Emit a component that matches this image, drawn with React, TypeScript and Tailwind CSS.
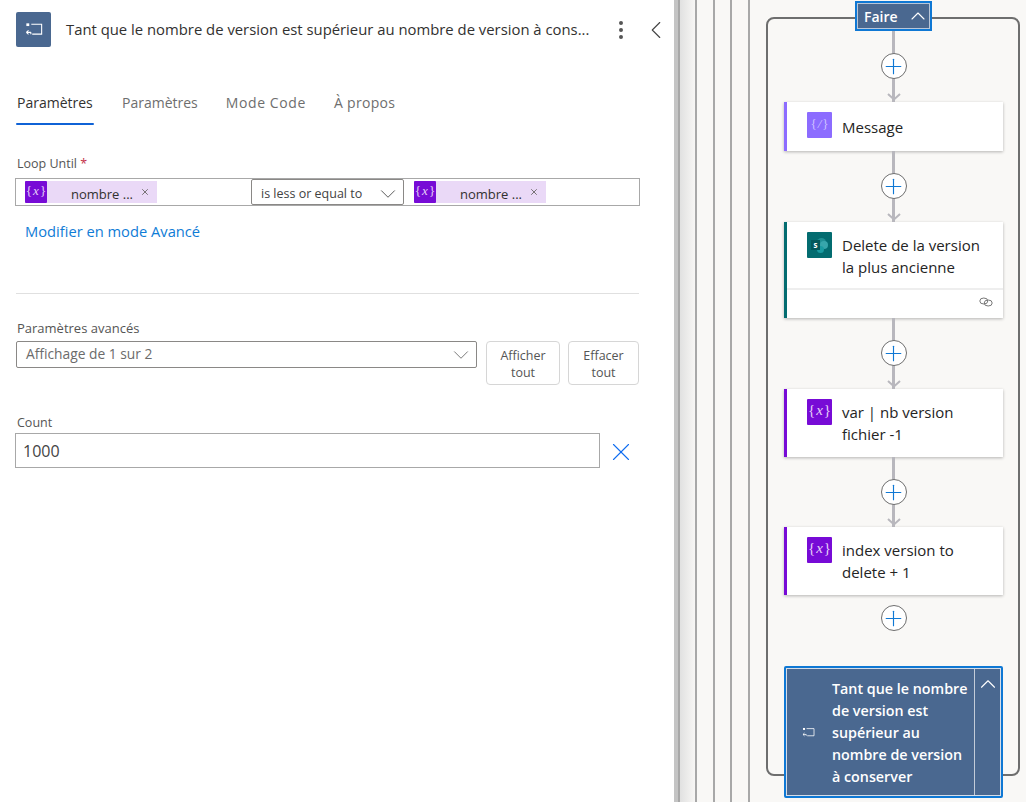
import { ChevronDown, ChevronLeft, ChevronUp, MoreVertical, Plus, X } from 'lucide-react'

const font = "font-['Open_Sans','Liberation_Sans',sans-serif]"

/** Icône "do until" : rectangle ouvert avec flèche de retour. */
function LoopIcon({ size }: { size: number }) {
  return (
    <svg width={size} height={size * 0.8} viewBox="0 0 20 16" fill="none" stroke="#fff" strokeWidth="1.2">
      <path d="M7 2.5h11.5v11H8" />
      <rect x="1.5" y="1.5" width="3.2" height="3" fill="#fff" stroke="none" />
      <path d="M1.5 11.5h5M1.5 11.5l2.4-2.2M1.5 11.5l2.4 2.2M6.5 11.5v2" />
    </svg>
  )
}

function VarIcon({
  size = 'w-[25px] h-[26px] text-[15px]',
  bg = 'bg-[#770bd6]',
  color = 'text-[#e6d2f7]',
  label = 'x',
}: {
  size?: string
  bg?: string
  color?: string
  label?: string
}) {
  return (
    <div className={`${size} ${bg} ${color} flex shrink-0 items-center justify-center rounded-[1px] pb-[3px] font-['Liberation_Serif',serif]`}>
      <span>{'{'}</span>
      <span className="italic px-[1px]">{label}</span>
      <span>{'}'}</span>
    </div>
  )
}

function Token() {
  return (
    <div className="flex h-[22px] w-[132px] items-center bg-[#ead9f7]">
      <VarIcon size="w-[22px] h-[22px] text-[13px]" />
      <span className="ml-[24px] w-[69px] pt-[5px] text-[13px] text-[#323130]">nombre ...</span>
      <X size={10} strokeWidth={2} className="text-[#605e5c]" />
    </div>
  )
}

function AddButton() {
  return (
    <div className="flex h-[26px] w-[26px] items-center justify-center rounded-full border border-[#6e6e6e] bg-white">
      <Plus size={25} strokeWidth={1.1} className="shrink-0 text-[#0f78d4]" />
    </div>
  )
}

function Connector({ height = 'h-[71px]' }: { height?: string }) {
  return (
    <div className={`relative flex ${height} w-full justify-center`}>
      <div className="h-full w-[3px] bg-[#b8b7bd]" />
      <svg width="14" height="8" viewBox="0 0 14 8" fill="none" stroke="#b8b7bd" strokeWidth="2" className="absolute bottom-[1px] left-[102.5px]">
        <path d="M1 1l6 5.5L13 1" />
      </svg>
      <div className="absolute top-[22px]">
        <AddButton />
      </div>
    </div>
  )
}

function Card({ accent, icon, lines, height, footer }: { accent: string; icon: React.ReactNode; lines: string[]; height: string; footer?: boolean }) {
  return (
    <div className={`w-[219px] ${height} shrink-0 border-l-[3px] ${accent} bg-white shadow-[0_1px_3px_rgba(0,0,0,0.28)]`}>
      <div className="flex gap-[10px] pl-[20px] pt-[10px]">
        {icon}
        <div className={`text-[15px] leading-[22px] text-[#242424] ${lines.length === 1 ? 'pt-[4px]' : 'pt-[2px]'}`}>
          {lines.map((l) => (
            <div key={l}>{l}</div>
          ))}
        </div>
      </div>
      {footer && (
        <div className="mt-[10px] flex h-[30px] justify-end border-t-2 border-[#eeeeee] pr-[10px] pt-[7px]">
          <svg width="14" height="10" viewBox="0 0 14 10" fill="none" stroke="#777" strokeWidth="1">
            <ellipse cx="4.8" cy="4" rx="4" ry="3" />
            <ellipse cx="9.2" cy="6" rx="4" ry="3" />
          </svg>
        </div>
      )}
    </div>
  )
}

function SharePointIcon() {
  return (
    <div className="relative h-[26px] w-[25px] shrink-0 overflow-hidden rounded-[1px] bg-[#036c70]">
      <div className="absolute left-[10px] top-[6px] h-[9px] w-[9px] rounded-full bg-[#1f8f93]" />
      <div className="absolute left-[13px] top-[9px] h-[8px] w-[8px] rounded-full bg-[#37a6ab]" />
      <div className="absolute left-[10px] top-[14px] h-[7px] w-[7px] rounded-full bg-[#1a9ba1]" />
      <div className="absolute left-[4px] top-[8px] flex h-[10px] w-[9px] items-center justify-center bg-[#03585c] text-[8px] font-bold text-white">
        s
      </div>
    </div>
  )
}

function SidePanel() {
  return (
    <div className="flex h-full w-[674px] shrink-0 flex-col bg-white pl-[16px] text-[#323130]">
      <div className="mt-[12px] flex h-[35px] items-center">
        <div className="flex h-[35px] w-[35px] items-center justify-center rounded-[2px] bg-[#4a6890]">
          <LoopIcon size={18} />
        </div>
        <div className="ml-[15px] w-[526px] whitespace-nowrap text-[14.85px] text-[#323130]">
          Tant que le nombre de version est supérieur au nombre de version à cons...
        </div>
        <MoreVertical size={24} strokeWidth={2} className="ml-[17px] text-[#555]" />
        <ChevronLeft size={30} strokeWidth={0.9} className="ml-[8px] text-[#444]" />
      </div>

      <div className="mt-[43px] flex h-[35px] gap-[28px] pt-[2px] text-[14px] text-[#6e6e6e]">
        <div className="relative w-[78px] pl-[1px] font-medium text-[#323130]">
          Paramètres
          <div className="absolute bottom-0 left-0 right-0 h-[2px] rounded-full bg-[#0f62d6]" />
        </div>
        <div>Paramètres</div>
        <div className="tracking-[0.6px]">Mode Code</div>
        <div className="tracking-[0.3px]">À propos</div>
      </div>

      <div className="mt-[30px] h-[18px] pl-[1px] text-[12.5px] leading-[18px] text-[#555]">
        Loop Until <span className="text-[#c4314b]">*</span>
      </div>
      <div className="-ml-[1px] mt-[5px] flex h-[28px] w-[625px] border border-[#a8a8a8]">
        <div className="w-[235px] pl-[9px] pt-[2px]">
          <Token />
        </div>
        <div className="flex w-[153px] items-center justify-between rounded-[2px] border border-[#8a8886] pl-[9px] pr-[2px] pt-[4px] text-[12.5px] text-[#424242]">
          is less or equal to
          <ChevronDown size={26} strokeWidth={0.8} className="-my-2" />
        </div>
        <div className="pl-[10px] pt-[2px]">
          <Token />
        </div>
      </div>
      <div className="ml-[9px] mt-[15px] text-[14.7px] leading-[21px] text-[#0f7cd6]">Modifier en mode Avancé</div>

      <div className="mt-[51px] h-px w-[623px] bg-[#e0e0e0]" />

      <div className="mt-[25px] pl-[1px] text-[13px] leading-[18px] text-[#555]">Paramètres avancés</div>
      <div className="mt-[4px] flex items-start">
        <div className="flex h-[27px] w-[461px] items-center justify-between rounded-[2px] border border-[#8a8886] pl-[9px] pr-[2px] text-[13.8px] text-[#6b6b6b]">
          Affichage de 1 sur 2
          <ChevronDown size={26} strokeWidth={0.8} className="text-[#666]" />
        </div>
        <div className="ml-[9px] flex h-[44px] w-[74px] items-center justify-center rounded-[4px] border border-[#d6d6d6] pt-[1px] text-center text-[12.5px] leading-[17px] text-[#555]">
          Afficher
          <br />
          tout
        </div>
        <div className="ml-[8px] flex h-[44px] w-[71px] items-center justify-center rounded-[4px] border border-[#d6d6d6] pt-[1px] text-center text-[12.5px] leading-[17px] text-[#555]">
          Effacer
          <br />
          tout
        </div>
      </div>

      <div className="mt-[29px] pl-[1px] text-[12.5px] leading-[18px] text-[#555]">Count</div>
      <div className="-ml-[1px] mt-[1px] flex items-center">
        <div className="flex h-[35px] w-[585px] items-center border border-[#a8a8a8] pl-[7px] text-[16px] text-[#444]">1000</div>
        <X size={30} strokeWidth={0.9} className="ml-[6px] mt-[3px] text-[#0f6cf0]" />
      </div>
    </div>
  )
}

function Canvas() {
  return (
    <div className="relative h-full flex-1 overflow-hidden border-l-[4px] border-[#c4c4c4] bg-[#f9f8f6]">
      <div className="absolute inset-y-0 left-0 w-[18px] bg-gradient-to-r from-[#dedede] to-[#f9f8f6]" />
      {/* Lijnen van de bovenliggende scopes */}
      <div className="absolute inset-y-0 left-0 w-[2px] bg-[#a8a8a8]" />
      <div className="absolute inset-y-0 left-[17px] w-[2px] bg-[#a8a8a8]" />
      <div className="absolute inset-y-0 left-[35px] w-[2px] bg-[#a8a8a8]" />
      <div className="absolute inset-y-0 left-[52px] w-[2px] bg-[#a8a8a8]" />
      <div className="absolute inset-y-0 left-[70px] w-[2px] bg-[#a8a8a8]" />
      <div className="absolute left-[88px] top-[17px] h-[759px] w-[254px] rounded-[8px] border-2 border-[#6e6e6e]" />

      <div className="absolute left-[106px] top-[1px] flex w-[219px] flex-col items-center">
        <div className="flex h-[30px] w-[77px] items-center justify-between border-[2px] border-[#0f78d4] bg-[#4a6890] pl-[7px] text-[14px] font-semibold text-white outline outline-1 -outline-offset-3 outline-[#b9c6d8]">
          Faire
          <ChevronUp size={24} strokeWidth={1.1} />
        </div>
        <Connector />
        <Card accent="border-[#8c6cff]" height="h-[49px]" lines={['Message']} icon={<VarIcon bg="bg-[#8c6cff]" color="text-[#cfc2ff]" size="w-[25px] h-[26px] text-[13px]" label="/" />} />
        <Connector />
        <Card accent="border-[#036c70]" height="h-[96px]" lines={['Delete de la version', 'la plus ancienne']} icon={<SharePointIcon />} footer />
        <Connector />
        <Card accent="border-[#770bd6]" height="h-[68px]" lines={['var | nb version', 'fichier -1']} icon={<VarIcon />} />
        <Connector height="h-[70px]" />
        <Card accent="border-[#770bd6]" height="h-[68px]" lines={['index version to', 'delete + 1']} icon={<VarIcon />} />
        <div className="flex h-[71px] items-start pt-[10px]">
          <AddButton />
        </div>
        <div className="flex h-[132px] w-[219px] shrink-0 rounded-[2px] border-[2px] border-[#0f78d4] bg-[#4a6890] text-white outline outline-1 -outline-offset-3 outline-[#d6dde8]">
          <div className="flex w-[188px] items-center pl-[16px]">
            <LoopIcon size={13} />
            <div className="ml-[17px] pt-[1px] text-[14.3px] font-semibold leading-[22px]">
              Tant que le nombre
              <br />
              de version est
              <br />
              supérieur au
              <br />
              nombre de version
              <br />à conserver
            </div>
          </div>
          <div className="flex flex-1 justify-center border-l border-[#c3ccd9] pt-[3px]">
            <ChevronUp size={26} strokeWidth={1} />
          </div>
        </div>
      </div>
    </div>
  )
}

export default function App() {
  return (
    <div className={`flex h-[802px] w-[1026px] overflow-hidden ${font}`}>
      <SidePanel />
      <Canvas />
    </div>
  )
}
